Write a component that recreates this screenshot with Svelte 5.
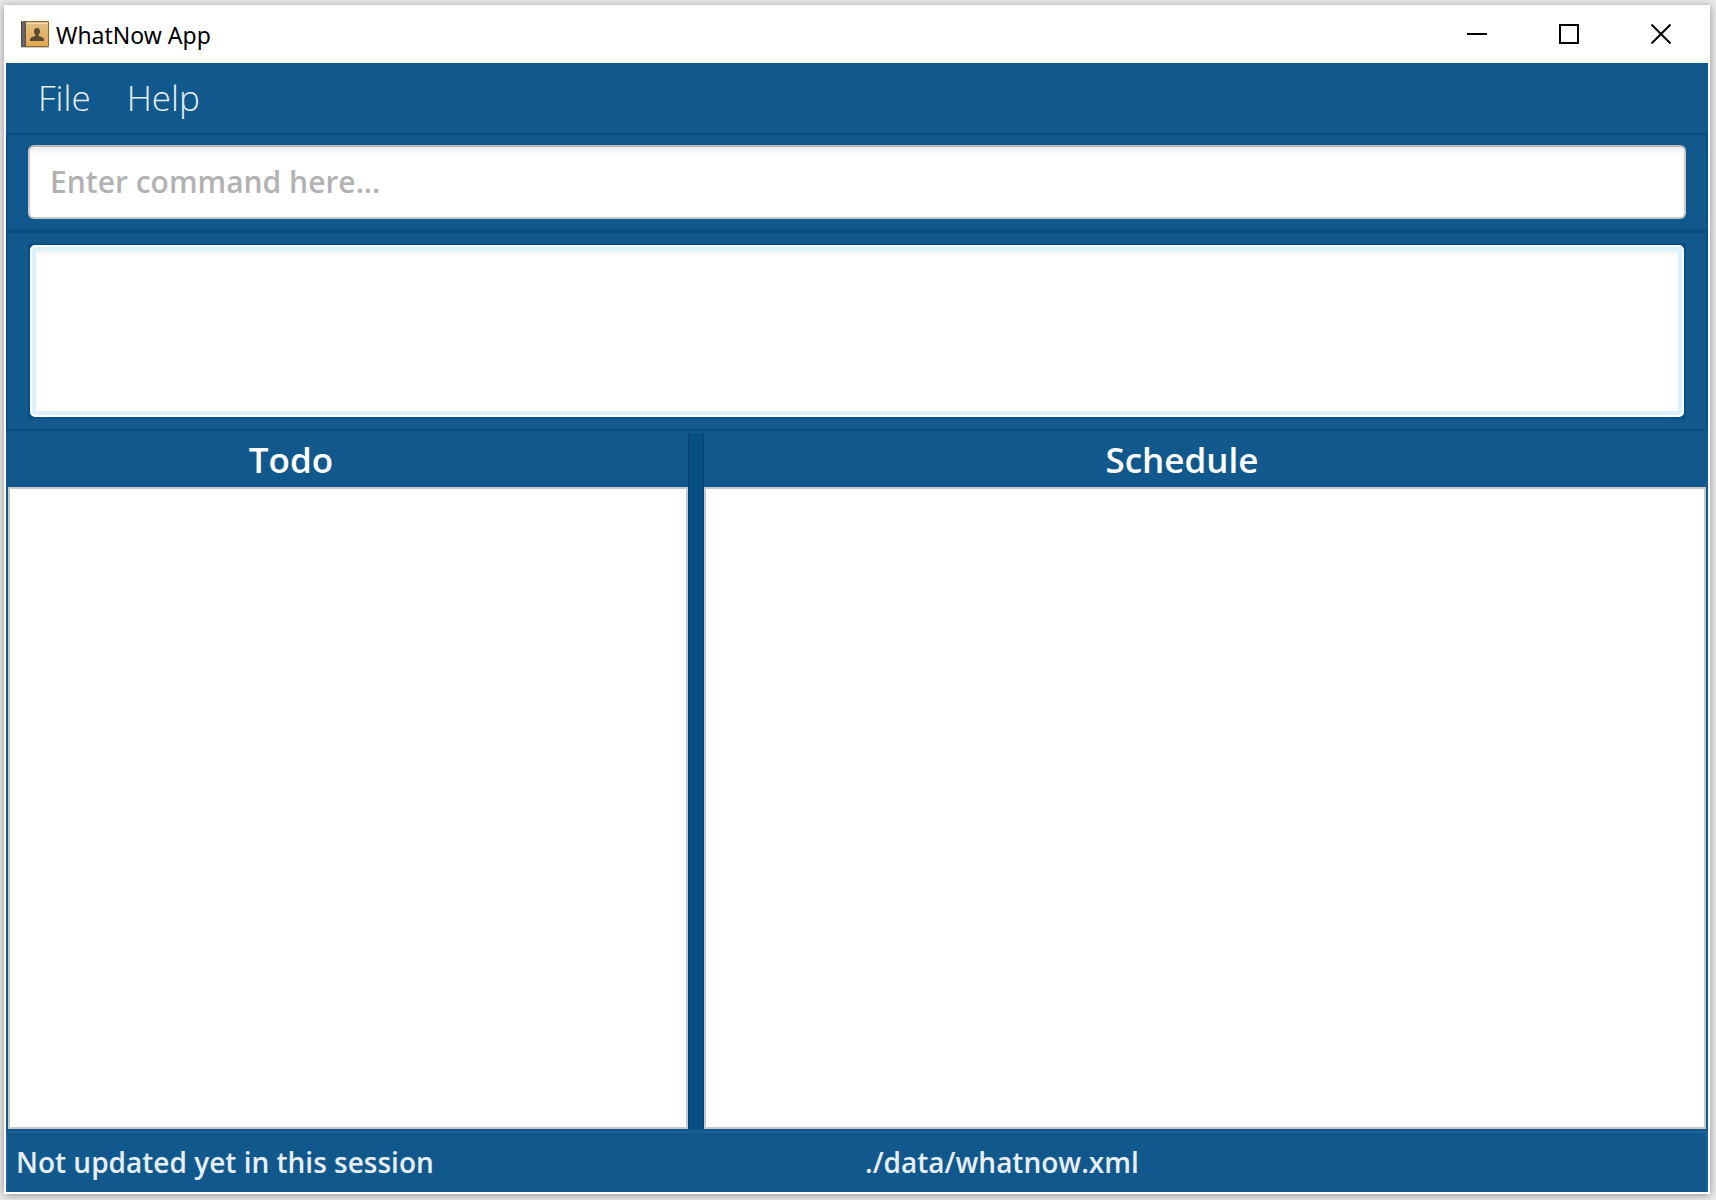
<script>
  let command = $state('');
  let result = $state('');
  const menus = ['File', 'Help'];
</script>

<div class="desktop">
  <div class="window">
    <header class="titlebar">
      <svg class="appicon" viewBox="0 0 30 30" aria-hidden="true">
        <defs>
          <linearGradient id="cover" x1="0" y1="0" x2="0" y2="1">
            <stop offset="0" stop-color="#dfc087" />
            <stop offset="1" stop-color="#e0a94c" />
          </linearGradient>
          <linearGradient id="spine" x1="0" y1="0" x2="1" y2="0">
            <stop offset="0" stop-color="#4d4343" />
            <stop offset="0.5" stop-color="#756868" />
            <stop offset="1" stop-color="#574b49" />
          </linearGradient>
        </defs>
        <rect x="1" y="26" width="28" height="2" rx="1" fill="#c9c9c9" />
        <rect x="1" y="1" width="28" height="26" rx="1" fill="#8f6a2c" />
        <rect x="6" y="2" width="22" height="24" fill="url(#cover)" />
        <rect x="6" y="3" width="22" height="1" fill="#f4deb0" />
        <rect x="1" y="1" width="5" height="26" rx="1" fill="url(#spine)" />
        <path d="M17 8c2 0 3 1.300 3 3.300c0 1.500-.6 2.500-1.300 3.200v1.500c1.800.7 5.300 1.300 5.300 3.500v1.500H10v-1.500c0-2.200 3.500-2.800 5.300-3.500v-1.500c-.7-.7-1.300-1.700-1.300-3.200C14 9.300 15 8 17 8z" fill="#5c4a30" />
      </svg>
      <h1>WhatNow App</h1>
      <div class="controls">
        <button type="button" aria-label="Minimize">
          <svg viewBox="0 0 20 20"><path d="M0 10H20" /></svg>
        </button>
        <button type="button" aria-label="Maximize">
          <svg viewBox="0 0 20 20"><path d="M1 1H19V19H1Z" /></svg>
        </button>
        <button type="button" aria-label="Close">
          <svg viewBox="0 0 20 20"><path d="M.5 .5L19.500 19.500M19.500 .5L.5 19.500" /></svg>
        </button>
      </div>
    </header>

    <main>
      <nav class="menubar">
        {#each menus as menu}
          <button type="button">{menu}</button>
        {/each}
      </nav>

      <section class="pane">
        <input class="command" type="text" aria-label="Command" placeholder="Enter command here..." bind:value={command} />
      </section>

      <section class="pane">
        <div class="halo">
          <textarea class="result" aria-label="Result" readonly bind:value={result}></textarea>
        </div>
      </section>

      <div class="split">
        <section class="panel todo">
          <h2>Todo</h2>
          <div class="list"></div>
        </section>
        <div class="divider"></div>
        <section class="panel schedule">
          <h2>Schedule</h2>
          <div class="list"></div>
        </section>
      </div>

      <footer class="status">
        <span>Not updated yet in this session</span>
        <span>./data/whatnow.xml</span>
      </footer>
    </main>
  </div>
</div>

<style>
  :global(body) {
    margin: 0;
    background: #eaeaea;
  }
  .desktop {
    box-sizing: border-box;
    min-height: 100vh;
    padding: 5px 6px 6px 4px;
    display: flex;
    font-family: 'Open Sans', 'Noto Sans', sans-serif;
  }
  .window {
    flex: 1;
    display: flex;
    flex-direction: column;
    padding: 0 2px 2px;
    background: #fff;
    box-shadow: 0 1px 8px rgba(0, 0, 0, 0.4);
  }
  .titlebar {
    box-sizing: border-box;
    display: flex;
    align-items: center;
    height: 58px;
    padding: 2px 1px 0 14px;
  }
  .appicon {
    width: 30px;
    height: 30px;
  }
  h1 {
    margin: 0 0 0 6px;
    font-family: 'Noto Sans', sans-serif;
    font-size: 23px;
    line-height: 32px;
    font-weight: 400;
    color: #000;
  }
  .controls {
    display: flex;
    margin-left: auto;
  }
  .controls button {
    display: grid;
    place-items: center;
    width: 92px;
    height: 56px;
    padding: 0 0 2px;
    border: 0;
    background: none;
  }
  .controls svg {
    width: 20px;
    height: 20px;
    fill: none;
    stroke: #000;
    stroke-width: 2;
  }
  main {
    flex: 1;
    display: flex;
    flex-direction: column;
    background: #11598d;
  }
  .menubar {
    display: flex;
    height: 70px;
    padding-left: 14px;
  }
  .menubar button {
    padding: 0 18px;
    border: 0;
    background: none;
    font: 300 35px/70px 'Open Sans', sans-serif;
    color: #e7eef4;
  }
  .pane {
    padding: 10px 20px;
    border: 2px solid #084f84;
  }
  .command {
    box-sizing: border-box;
    display: block;
    width: 100%;
    height: 74px;
    padding: 0 20px 2px;
    border: 2px solid #c8c8c8;
    border-top-color: #b9b9b9;
    border-radius: 6px;
    background: linear-gradient(#ededed, #fff 8px);
    font: 600 30px/40px 'Open Sans', sans-serif;
    outline: none;
  }
  .command::placeholder {
    color: #b2b2b2;
    opacity: 1;
  }
  .halo {
    padding: 2px;
    background: #084f84;
  }
  .result {
    box-sizing: border-box;
    display: block;
    width: 100%;
    height: 172px;
    padding: 8px 20px;
    border: 2px solid #fff;
    border-radius: 5px;
    background: linear-gradient(#ededed, #fff 10px);
    box-shadow: inset 0 0 0 4px #dcf1f9;
    font: 600 30px/40px 'Open Sans', sans-serif;
    outline: none;
    resize: none;
  }
  .split {
    flex: 1;
    display: flex;
    padding: 2px 2px 0;
  }
  .panel {
    display: flex;
    flex-direction: column;
  }
  .todo {
    flex: 680 1 0;
  }
  .schedule {
    flex: 1002 1 0;
  }
  h2 {
    margin: 0;
    font-size: 35px;
    line-height: 54px;
    font-weight: 600;
    text-align: center;
    color: #fff;
  }
  .todo h2 {
    padding-right: 114px;
  }
  .schedule h2 {
    padding-right: 46px;
  }
  .list {
    flex: 1;
    border: 2px solid #c8c8c8;
    background: #fff;
  }
  .divider {
    box-sizing: border-box;
    width: 16px;
    border: solid #044679;
    border-width: 0 2px;
    background: #084f84;
  }
  .status {
    display: grid;
    grid-template-columns: 1fr 1fr;
    margin-top: 2px;
    border: 2px solid #1a6094;
    border-bottom: 0;
    font-size: 28px;
    line-height: 59px;
    font-weight: 600;
    color: #e7eef4;
  }
  .status span {
    padding-left: 8px;
  }
</style>
